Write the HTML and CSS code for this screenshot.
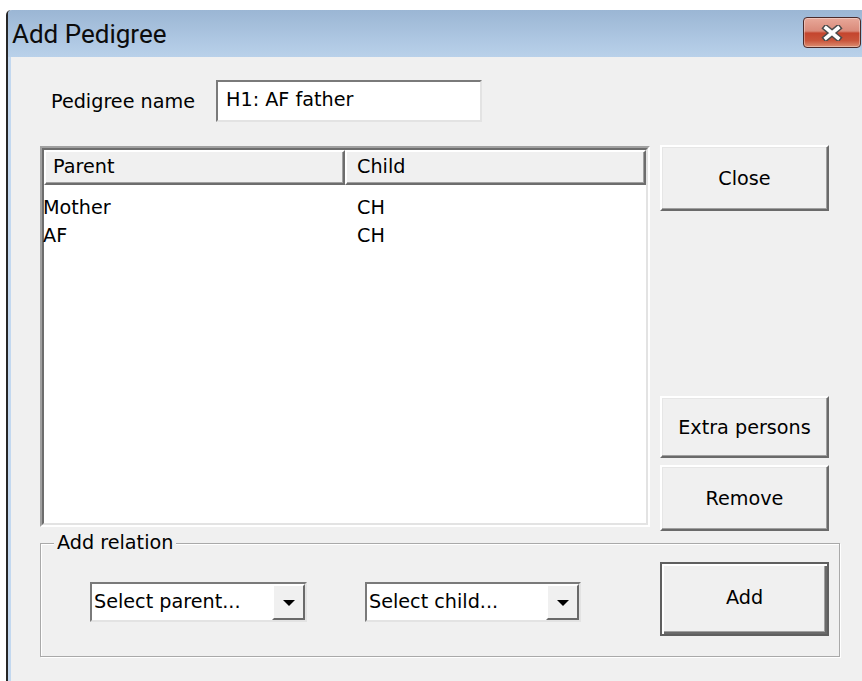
FILE: index.html
```html
<!DOCTYPE html>
<html lang="en">
<head>
<meta charset="utf-8">
<title>Add Pedigree</title>
<link rel="stylesheet" href="styles.css">
</head>
<body>
<div class="window">
  <div class="titlebar">
    <span class="title">Add Pedigree</span>
    <button class="close-x" aria-label="Close window">
      <svg width="22" height="16" viewBox="0 0 22 16">
        <path d="M5 3 L17 13 M17 3 L5 13" stroke="#4b4b4b" stroke-width="6.5" stroke-linecap="square" fill="none"/>
        <path d="M5 3 L17 13 M17 3 L5 13" stroke="#ffffff" stroke-width="3.6" stroke-linecap="square" fill="none"/>
      </svg>
    </button>
  </div>
  <div class="client">
    <div class="name-row">
      <label class="name-label">Pedigree name</label>
      <div class="textbox">H1: AF father</div>
    </div>

    <div class="main">
      <div class="listview">
        <div class="lv-inner">
          <div class="lv-header">
            <div class="lv-col lv-col-parent">Parent</div>
            <div class="lv-col lv-col-child">Child</div>
          </div>
          <div class="lv-body">
            <div class="lv-row"><span class="cell-parent">Mother</span><span class="cell-child">CH</span></div>
            <div class="lv-row"><span class="cell-parent">AF</span><span class="cell-child">CH</span></div>
          </div>
        </div>
      </div>
      <div class="side">
        <button class="btn btn-close">Close</button>
        <div class="side-spacer"></div>
        <button class="btn btn-extra">Extra persons</button>
        <button class="btn btn-remove">Remove</button>
      </div>
    </div>

    <div class="group">
      <span class="group-label">Add relation</span>
      <div class="combo combo-parent">
        <span class="combo-text">Select parent...</span>
        <span class="combo-arrow"><span class="tri"></span></span>
      </div>
      <div class="combo combo-child">
        <span class="combo-text">Select child...</span>
        <span class="combo-arrow"><span class="tri"></span></span>
      </div>
      <button class="btn btn-default">Add</button>
    </div>
  </div>
</div>
</body>
</html>
```

FILE: styles.css
```css
* { box-sizing: border-box; }

html, body {
  margin: 0;
  height: 100%;
}

body {
  background: #ffffff;
  font-family: "DejaVu Sans", sans-serif;
  font-size: 19.2px;
  color: #000;
  overflow: hidden;
}

/* window frame */
.window {
  margin: 10px 0 0 6px;
  height: 671px;
  display: flex;
  flex-direction: column;
  border-left: 2px solid #262626;
  border-top-left-radius: 5px;
}

.titlebar {
  flex: none;
  height: 47px;
  display: flex;
  align-items: flex-start;
  background: linear-gradient(#9bb6d4, #b9d1ea);
  border-top-left-radius: 4px;
}

.title {
  font-family: Roboto, sans-serif;
  font-size: 26px;
  line-height: 30px;
  margin: 9px 0 0 4px;
  color: #0c0c0c;
}

.close-x {
  margin: 7px 1px 0 auto;
  width: 58px;
  height: 31px;
  padding: 0;
  display: flex;
  align-items: center;
  justify-content: center;
  border: 1px solid #4a2a2a;
  border-radius: 4px;
  background: linear-gradient(#e8a899 0%, #d98a7a 45%, #c4452e 52%, #c9553b 78%, #dc8e72 100%);
  box-shadow: inset 0 0 0 1px rgba(255, 255, 255, 0.35);
}

.client {
  flex: 1;
  background: #f0f0f0;
  border-left: 3px solid #c3d8ef;
  padding-top: 23px;
}

/* name row */
.name-row {
  display: flex;
  align-items: center;
  padding-left: 40px;
}

.name-label {
  width: 165px;
}

.textbox {
  width: 266px;
  height: 42px;
  background: #fff;
  border: 2px solid;
  border-color: #7a7a7a #e3e3e3 #e3e3e3 #7a7a7a;
  padding: 0 8px;
  line-height: 36px;
}

/* list + side buttons */
.main {
  margin-top: 23px;
  padding-left: 29px;
  display: grid;
  grid-template-columns: 610px 169px;
  column-gap: 10px;
  height: 386px;
}

.listview {
  margin-top: 1px;
  height: 381px;
  border: 2px solid;
  border-color: #a0a0a0 #ffffff #ffffff #a0a0a0;
}

.lv-inner {
  height: 100%;
  background: #fff;
  border: 2px solid;
  border-color: #6d6d6d #e3e3e3 #e3e3e3 #6d6d6d;
}

.lv-header {
  display: grid;
  grid-template-columns: 301px 1fr;
  height: 35px;
  background: #f0f0f0;
}

.lv-col {
  border: 2px solid;
  border-color: #ffffff #6d6d6d #6d6d6d #ffffff;
  box-shadow: inset -1px -1px #a0a0a0;
  line-height: 30px;
}

.lv-col-parent { padding-left: 7px; }
.lv-col-child { padding-left: 10px; }

.lv-body {
  padding-top: 9px;
}

.lv-row {
  display: grid;
  grid-template-columns: 301px 1fr;
  height: 28px;
  line-height: 28px;
}

.cell-parent { margin-left: -1px; }
.cell-child { padding-left: 12px; }

.side {
  display: flex;
  flex-direction: column;
}

.side-spacer { flex: 1; }

.btn {
  font: inherit;
  color: #000;
  background: #f0f0f0;
  border: 2px solid;
  border-color: #ffffff #6a6a6a #6a6a6a #ffffff;
  box-shadow: inset -1px -1px #a0a0a0, inset 1px 1px #e6e6e6;
  padding: 0;
}

.btn-close { height: 66px; }
.btn-extra { height: 62px; }
.btn-remove { height: 66px; margin-top: 7px; }

/* group box */
.group {
  position: relative;
  margin: 12px 0 0 29px;
  width: 800px;
  height: 114px;
  border: 1px solid #a9a9a9;
  box-shadow: inset 1px 1px #ffffff, 1px 1px #ffffff;
  display: flex;
  align-items: flex-start;
  padding: 18px 10px 0 49px;
}

.group-label {
  position: absolute;
  top: -13px;
  left: 13px;
  padding: 0 3px;
  background: #f0f0f0;
  line-height: 24px;
}

.combo {
  margin-top: 20px;
  height: 40px;
  display: flex;
  background: #fff;
  border: 2px solid;
  border-color: #7a7a7a #e3e3e3 #e3e3e3 #7a7a7a;
}

.combo-parent { width: 217px; }
.combo-child { width: 216px; margin-left: 58px; }

.combo-text {
  flex: 1;
  padding-left: 2px;
  line-height: 36px;
  white-space: nowrap;
  overflow: hidden;
}

.combo-arrow {
  width: 33px;
  flex: none;
  display: flex;
  align-items: center;
  justify-content: center;
  background: #f0f0f0;
  border: 2px solid;
  border-color: #ffffff #6a6a6a #6a6a6a #ffffff;
}

.tri {
  width: 0;
  height: 0;
  border-left: 6px solid transparent;
  border-right: 6px solid transparent;
  border-top: 6px solid #000;
  margin-top: 2px;
}

.btn-default {
  margin-left: auto;
  width: 169px;
  height: 74px;
  border: 2px solid #5f5f5f;
  box-shadow: inset 2px 2px #ffffff, inset -2px -2px #6a6a6a, inset -3px -3px #a0a0a0;
  padding-bottom: 4px;
}
```
